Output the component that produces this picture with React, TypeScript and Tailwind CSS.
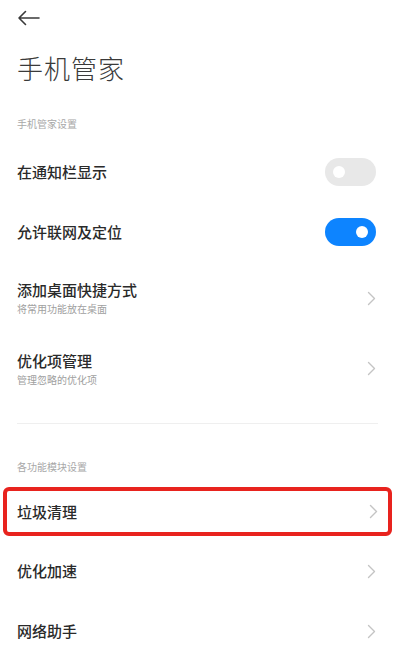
import React from 'react';

const font = { fontFamily: '"Noto Sans CJK SC", "Noto Sans", sans-serif' };

const Chevron: React.FC = () => (
  <svg width="9" height="15" viewBox="0 0 9 15" fill="none" className="flex-shrink-0">
    <polyline points="1.5,1.5 7.5,7.5 1.5,13.5" stroke="#c4c4c4" strokeWidth="1.4" strokeLinecap="round" strokeLinejoin="round" />
  </svg>
);

const Toggle: React.FC<{ on?: boolean }> = ({ on }) => (
  <div
    className={`w-[51px] h-[28px] rounded-full flex items-center px-[8px] flex-shrink-0 ${
      on ? 'bg-[#0d84ff] justify-end' : 'bg-[#e8e8e8] justify-start'
    }`}
  >
    <div className="w-[12px] h-[12px] rounded-full bg-white" />
  </div>
);

const SectionHeader: React.FC<{ text: string }> = ({ text }) => (
  <div className="px-[17px] text-[10px] leading-[14px] text-[#a8a8a8]">{text}</div>
);

const Row: React.FC<{ title: string; sub?: string; right: React.ReactNode; h: string }> = ({ title, sub, right, h }) => (
  <div className={`flex items-center justify-between pl-[17px] pr-[19px] ${h}`}>
    <div className="flex flex-col">
      <span className="text-[15px] leading-[20px] font-medium text-[#2a2a2a]">{title}</span>
      {sub && <span className="text-[10px] leading-[14px] text-[#a0a0a0] mt-[2px]">{sub}</span>}
    </div>
    {right}
  </div>
);

export default function App() {
  return (
    <div className="w-[395px] h-[660px] bg-white overflow-hidden" style={font}>
      <div className="pl-[17px] pt-[10px] h-[30px]">
        <svg width="24" height="16" viewBox="0 0 24 16" fill="none">
          <path d="M22 8H2M8.5 1.5L2 8l6.5 6.5" stroke="#3a3a3a" strokeWidth="1.6" strokeLinecap="round" strokeLinejoin="round" />
        </svg>
      </div>
      <div className="px-[17px] pt-[20px] text-[26px] leading-[36px] font-light text-[#3a3a3a] tracking-[1px]">手机管家</div>
      <div className="pt-[31px]">
        <SectionHeader text="手机管家设置" />
      </div>
      <div className="pt-[11px]">
        <Row title="在通知栏显示" right={<Toggle />} h="h-[60px]" />
        <Row title="允许联网及定位" right={<Toggle on />} h="h-[60px]" />
        <Row title="添加桌面快捷方式" sub="将常用功能放在桌面" right={<Chevron />} h="h-[72px]" />
        <Row title="优化项管理" sub="管理忽略的优化项" right={<Chevron />} h="h-[69px]" />
      </div>
      <div className="mx-[17px] mt-[20px] h-px bg-[#efefef]" />
      <div className="pt-[36px]">
        <SectionHeader text="各功能模块设置" />
      </div>
      <div className="mt-[13px] mx-[3px] h-[49px] border-[4px] border-[#e8231e] rounded-[6px] flex items-center justify-between pl-[10px] pr-[10px]">
        <span className="text-[15px] leading-[20px] font-medium text-[#2a2a2a]">垃圾清理</span>
        <Chevron />
      </div>
      <div className="pt-[5px]">
        <Row title="优化加速" right={<Chevron />} h="h-[60px]" />
        <Row title="网络助手" right={<Chevron />} h="h-[60px]" />
      </div>
    </div>
  );
}
